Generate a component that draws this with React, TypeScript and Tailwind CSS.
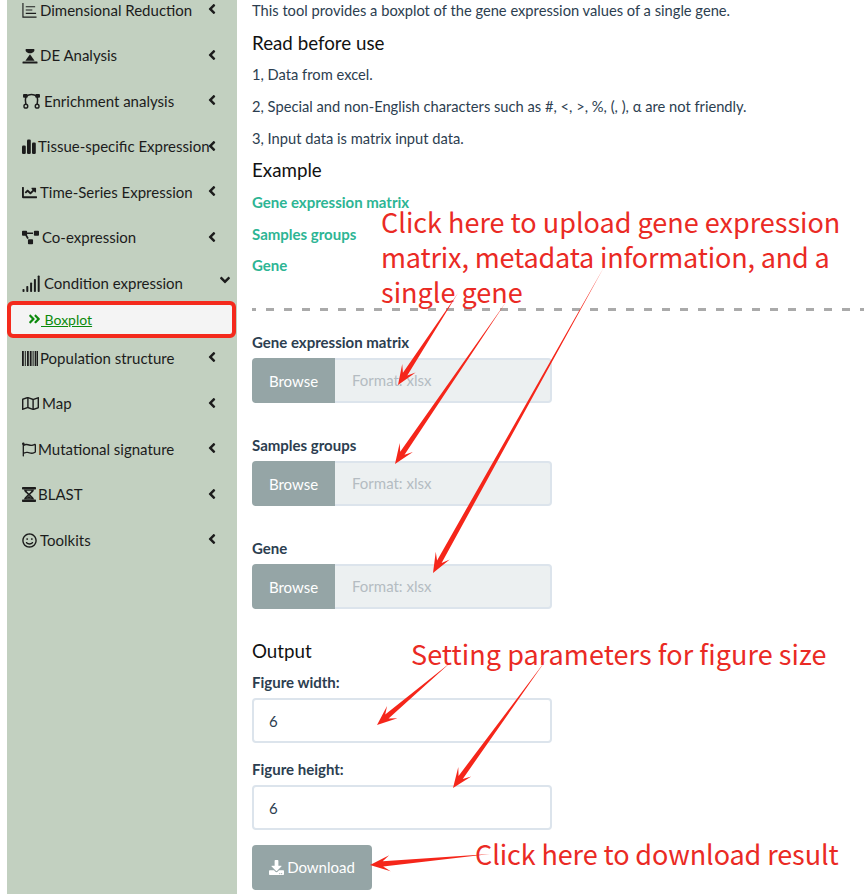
import type { ReactNode } from "react";
import {
  FaAngleDown,
  FaAngleLeft,
  FaAngleDoubleRight,
  FaChartLine,
  FaDownload,
  FaProjectDiagram,
  FaRegFlag,
  FaRegMap,
  FaRegSmile,
} from "react-icons/fa";

const AxisIcon = () => (
  <svg viewBox="0 0 16 16" className="h-[15px] w-[15px]" fill="none" stroke="currentColor" strokeWidth="1.2">
    <path d="M1 0v15h14.5" />
    <path d="M4 4h10M4 7.5h7M4 11h11" />
  </svg>
);

const ScaleIcon = () => (
  <svg viewBox="0 0 16 16" className="h-4 w-4" fill="currentColor">
    <path d="M4.5 1h7c.6 0 1 .5 1 1.1 0 2-2.2 2.6-3.2 3.2h-2.6C5.7 4.7 3.5 4.100 3.500 2.100 3.500 1.500 3.900 1 4.500 1z" />
    <path d="M8 6.2l4.600 6.600H3.400z" />
    <rect x="0.500" y="13.500" width="15" height="2" rx="0.600" />
  </svg>
);

const CurveIcon = () => (
  <svg viewBox="0 0 19 17" className="h-[16px] w-[19px]" fill="none" stroke="currentColor">
    <path d="M4 3.500C7 1 12 1 15 3.500" strokeWidth="1.400" />
    <path d="M3.500 4C2.500 7 3 9.500 3.500 12M15.500 4C16.500 7 16 9.500 15.500 12" strokeWidth="1.600" />
    <rect x="0.500" y="1" width="5" height="4" rx="1" fill="currentColor" stroke="none" />
    <rect x="13.500" y="1" width="5" height="4" rx="1" fill="currentColor" stroke="none" />
    <circle cx="3.500" cy="14" r="2" strokeWidth="1.500" />
    <circle cx="15.500" cy="14" r="2" strokeWidth="1.500" />
  </svg>
);

const BarsIcon = () => (
  <svg viewBox="0 0 14 15" className="h-[15px] w-[14px] shrink-0" fill="currentColor">
    <rect x="0" y="6.500" width="3.800" height="8.500" rx="1.300" />
    <rect x="5" y="0.500" width="3.800" height="14.500" rx="1.300" />
    <rect x="10" y="3.500" width="3.800" height="11.500" rx="1.300" />
  </svg>
);

const SignalIcon = () => (
  <svg viewBox="0 0 18 17" className="h-[17px] w-[18px]" fill="currentColor">
    <rect x="0.500" y="14" width="2" height="3" rx="0.800" />
    <rect x="4.300" y="11" width="2" height="6" rx="0.800" />
    <rect x="8.100" y="7.500" width="2" height="9.500" rx="0.800" />
    <rect x="11.900" y="4" width="2" height="13" rx="0.800" />
    <rect x="15.700" y="0.500" width="2" height="16.500" rx="0.800" />
  </svg>
);

const BarcodeIcon = () => (
  <svg viewBox="0 0 16 15" className="h-[15px] w-[16px]" fill="currentColor">
    <rect x="0" y="0" width="1.800" height="15" />
    <rect x="2.800" y="0" width="1" height="15" />
    <rect x="5" y="0" width="1.800" height="15" />
    <rect x="7.800" y="0" width="1.800" height="15" />
    <rect x="10.600" y="0" width="1" height="15" />
    <rect x="12.700" y="0" width="1.800" height="15" />
    <rect x="15" y="0" width="1" height="15" />
  </svg>
);

const HourglassIcon = () => (
  <svg viewBox="0 0 14 15" className="h-[15px] w-[14px]" fill="currentColor">
    <rect x="0" y="0" width="14" height="2.400" rx="0.700" />
    <rect x="0" y="12.600" width="14" height="2.400" rx="0.700" />
    <path d="M2 2.400h10c0 2.400-2.800 3.800-3.800 5.100 1 1.300 3.800 2.700 3.800 5.100H2c0-2.400 2.800-3.800 3.800-5.100C4.800 6.200 2 4.800 2 2.400zM4.500 3.800C5 5 6.300 5.900 7 6.600 7.700 5.900 9 5 9.500 3.800zM7 8.400c-.7.700-2 1.600-2.500 2.800h5C9 10 7.700 9.100 7 8.400z" fillRule="evenodd" />
    <path d="M4.800 11.200C5.300 10 6.500 9.400 7 8.800c.5.600 1.700 1.200 2.200 2.400z" />
  </svg>
);

type MenuRow = { icon: ReactNode; label: string; gap: string };

const upperRows: MenuRow[] = [
  { icon: <AxisIcon />, label: "Dimensional Reduction", gap: "gap-[3px]" },
  { icon: <ScaleIcon />, label: "DE Analysis", gap: "gap-[2px]" },
  { icon: <CurveIcon />, label: "Enrichment analysis", gap: "gap-[3px]" },
  { icon: <BarsIcon />, label: "Tissue-specific Expression", gap: "gap-[2px]" },
  { icon: <FaChartLine className="h-[15px] w-[15px]" />, label: "Time-Series Expression", gap: "gap-[3px]" },
  { icon: <FaProjectDiagram className="h-[17px] w-[17px]" />, label: "Co-expression", gap: "gap-[3px]" },
];

const lowerRows: MenuRow[] = [
  { icon: <BarcodeIcon />, label: "Population structure", gap: "gap-[2px]" },
  { icon: <FaRegMap className="h-[17px] w-[17px]" />, label: "Map", gap: "gap-[3px]" },
  { icon: <FaRegFlag className="h-[15px] w-[14px]" />, label: "Mutational signature", gap: "gap-[2px]" },
  { icon: <HourglassIcon />, label: "BLAST", gap: "gap-[2px]" },
  { icon: <FaRegSmile className="h-[15px] w-[15px]" />, label: "Toolkits", gap: "gap-[3px]" },
];

const SideRow = ({ row, open = false }: { row: MenuRow; open?: boolean }) => (
  <div className="flex h-[45.5px] items-center pl-[15px] text-[15px] text-[#1c1c1c]">
    <div className={`flex w-[185px] shrink-0 items-center whitespace-nowrap ${row.gap}`}>
      {row.icon}
      <span>{row.label}</span>
    </div>
    {open ? (
      <FaAngleDown className="mb-[6px] ml-[11px] h-[16px] w-[14px]" />
    ) : (
      <FaAngleLeft className="mb-[2px] h-[16px] w-[10px]" />
    )}
  </div>
);

const FileField = ({ label, top }: { label: string; top: string }) => (
  <div className={top}>
    <div className="h-[20px] text-[15px] leading-[20px] font-bold text-[#2c3e50]">{label}</div>
    <div className="mt-[6px] flex h-[45px] w-[300px]">
      <div className="flex w-[83px] items-center justify-center rounded-l-[4px] bg-[#95a5a6] pt-[2px] text-[15px] text-white">
        Browse
      </div>
      <div className="flex flex-1 items-center rounded-r-[4px] border-2 border-l-0 border-[#dce4ec] bg-[#ecf0f1] pl-[17px] text-[15px] text-[#b4bcc2]">
        Format: xlsx
      </div>
    </div>
  </div>
);

const NumberField = ({ label, top }: { label: string; top: string }) => (
  <div className={top}>
    <div className="h-[20px] text-[15px] leading-[20px] font-bold text-[#2c3e50]">{label}</div>
    <div className="mt-[6px] flex h-[45px] w-[300px] items-center rounded-[4px] border-2 border-[#dce4ec] bg-white pt-[2px] pl-[15px] text-[15px] text-[#2c3e50]">
      6
    </div>
  </div>
);

// tapered annotation arrow: thin tail, widening towards a barbed head
const arrowPoints = (x1: number, y1: number, x2: number, y2: number) => {
  const len = Math.hypot(x2 - x1, y2 - y1);
  const ux = (x2 - x1) / len;
  const uy = (y2 - y1) / len;
  const nx = -uy;
  const ny = ux;
  const at = (back: number, side: number) =>
    `${x2 - ux * back + nx * side},${y2 - uy * back + ny * side}`;
  return [
    `${x1},${y1}`,
    at(13, 2.6),
    at(20, 8),
    `${x2},${y2}`,
    at(20, -8),
    at(13, -2.6),
  ].join(" ");
};

const arrows = [
  [458, 293, 398, 385],
  [506, 302, 395, 464],
  [604, 267, 433, 573],
  [450, 663, 377, 725],
  [546, 660, 453, 788],
  [490, 854, 370, 865],
];

const Note = ({ className, children }: { className: string; children: ReactNode }) => (
  <div className={`absolute text-[27px] leading-[35px] whitespace-nowrap text-[#ea2a24] ${className}`}>
    {children}
  </div>
);

export default function App() {
  return (
    <div className="relative flex h-[894px] w-[864px] overflow-hidden bg-white font-['Lato',sans-serif]">
      {/* Sidebar */}
      <aside className="ml-[7px] h-full w-[230px] shrink-0 bg-[#c2d0c0]">
        <div className="mt-[-12.75px]">
          {upperRows.map((row) => (
            <SideRow key={row.label} row={row} />
          ))}
          <SideRow
            open
            row={{ icon: <SignalIcon />, label: "Condition expression", gap: "gap-[4px]" }}
          />
          <div className="mt-[-0.75px] mb-[1.75px] ml-[4px] mr-[5px] flex h-[28.5px] items-center rounded-[2px] bg-[#f4f4f4] pl-[17px] text-[14px] text-[#0b8a0b] outline-[4px] outline-[#f42a1c]">
            <FaAngleDoubleRight className="h-[14px] w-[13px]" />
            <span className="underline">&nbsp;Boxplot</span>
          </div>
          {lowerRows.map((row) => (
            <SideRow key={row.label} row={row} />
          ))}
        </div>
      </aside>

      {/* Main content */}
      <main className="flex-1 pl-[15px] text-[14.7px] leading-[21px] text-[#2c3e50]">
        <p>This tool provides a boxplot of the gene expression values of a single gene.</p>
        <h4 className="mt-[12px] text-[18.75px] leading-[20px] text-[#111]">Read before use</h4>
        <p className="mt-[11px]">1, Data from excel.</p>
        <p className="mt-[11px]">2, Special and non-English characters such as #, &lt;, &gt;, %, (, ), α are not friendly.</p>
        <p className="mt-[11px]">3, Input data is matrix input data.</p>
        <h4 className="mt-[11px] text-[18.75px] leading-[20px] text-[#111]">Example</h4>
        <p className="mt-[12px] text-[15px] font-bold text-[#2db594]">Gene expression matrix</p>
        <p className="mt-[11px] text-[15px] font-bold text-[#2db594]">Samples groups</p>
        <p className="mt-[10px] text-[15px] font-bold text-[#2db594]">Gene</p>
        <div className="mt-[32px] h-[3px] bg-[repeating-linear-gradient(90deg,#aaaaaa_0,#aaaaaa_4px,transparent_4px,transparent_14px,#aaaaaa_14px,#aaaaaa_18px)]" />
        <FileField label="Gene expression matrix" top="mt-[21px]" />
        <FileField label="Samples groups" top="mt-[32px]" />
        <FileField label="Gene" top="mt-[32px]" />
        <h4 className="mt-[32px] text-[18.75px] leading-[20px] text-[#111]">Output</h4>
        <NumberField label="Figure width:" top="mt-[11px]" />
        <NumberField label="Figure height:" top="mt-[16px]" />
        <div className="mt-[15px] flex h-[45px] w-[120px] items-center justify-center gap-[3px] rounded-[4px] bg-[#95a5a6] text-[15px] text-white">
          <FaDownload className="h-[15px] w-[15px]" />
          <span>Download</span>
        </div>
      </main>

      {/* Red annotations drawn over the page */}
      <svg className="pointer-events-none absolute inset-0 h-full w-full" viewBox="0 0 864 894" fill="#f5261a">
        {arrows.map(([x1, y1, x2, y2]) => (
          <polygon key={`${x1}-${y1}`} points={arrowPoints(x1, y1, x2, y2)} />
        ))}
      </svg>
      <div className="font-['Noto_Sans_CJK_SC','Noto_Sans',sans-serif]">
        <Note className="top-[204px] left-[381px]">
          Click here to upload gene expression
          <br />
          <span className="tracking-[-0.17px]">matrix, metadata information, and a</span>
          <br />
          single gene
        </Note>
        <Note className="top-[636px] left-[411px] tracking-[0.06px]">Setting parameters for figure size</Note>
        <Note className="top-[836px] left-[475px] tracking-[-0.1px]">Click here to download result</Note>
      </div>
    </div>
  );
}
